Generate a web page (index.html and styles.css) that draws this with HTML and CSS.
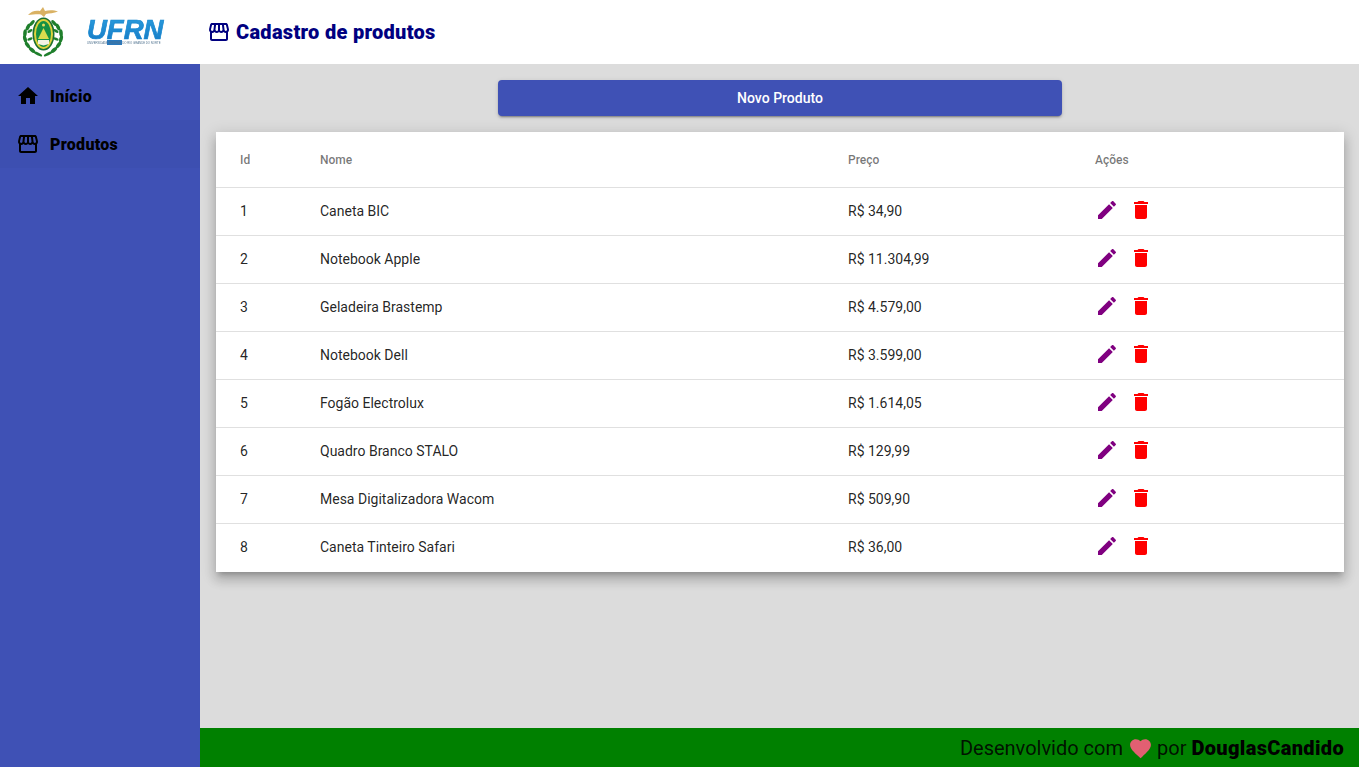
FILE: index.html
```html
<!DOCTYPE html>
<html lang="en">
<head>
  <meta charset="UTF-8" />
  <meta name="viewport" content="width=device-width, initial-scale=1.0"/>
  <title>Cadastro de produtos</title>
  <link rel="stylesheet" href="styles.css">
</head>
<body>
  <svg class="sprites" width="0" height="0">
    <symbol id="i-store" viewBox="0 0 24 24"><path d="M21.9 8.89l-1.05-4.37c-.22-.9-1-1.52-1.91-1.52H5.05c-.9 0-1.69.63-1.9 1.52L2.1 8.89c-.24 1.02-.02 2.06.62 2.88.08.11.19.19.28.29V19c0 1.1.9 2 2 2h14c1.1 0 2-.9 2-2v-6.94c.09-.09.2-.18.28-.28.64-.82.87-1.87.62-2.89zm-2.99-3.9l1.05 4.37c.1.42.01.84-.25 1.17-.14.18-.44.47-.94.47-.61 0-1.14-.49-1.21-1.14L16.98 5l1.93-.01zM13 5h1.96l.54 4.52c.05.39-.07.78-.33 1.07-.22.26-.54.41-.95.41-.67 0-1.22-.59-1.22-1.31V5zM8.49 9.52L9.04 5H11v4.69c0 .72-.55 1.31-1.29 1.31-.34 0-.65-.15-.89-.41-.25-.29-.37-.68-.33-1.07zm-4.45-.16L5.05 5h1.97l-.58 4.86c-.08.65-.6 1.14-1.21 1.14-.49 0-.8-.29-.93-.47-.27-.32-.36-.75-.26-1.17zM5 19v-6.03c.08.01.15.03.23.03.87 0 1.66-.36 2.24-.95.6.6 1.4.95 2.31.95.87 0 1.65-.36 2.23-.93.59.57 1.39.93 2.29.93.84 0 1.64-.35 2.24-.95.58.59 1.37.95 2.24.95.08 0 .15-.02.23-.03V19H5z"/></symbol>
    <symbol id="i-home" viewBox="0 0 24 24"><path d="M10 20v-6h4v6h5v-8h3L12 3 2 12h3v8z"/></symbol>
    <symbol id="i-edit" viewBox="0 0 24 24"><path d="M3 17.25V21h3.75L17.81 9.94l-3.75-3.75L3 17.25zM20.71 7.04c.39-.39.39-1.02 0-1.41l-2.34-2.34c-.39-.39-1.02-.39-1.41 0l-1.83 1.83 3.75 3.75 1.83-1.83z"/></symbol>
    <symbol id="i-delete" viewBox="0 0 24 24"><path d="M6 19c0 1.1.9 2 2 2h8c1.1 0 2-.9 2-2V7H6v12zM19 4h-3.5l-1-1h-5l-1 1H5v2h14V4z"/></symbol>
  </svg>

  <header class="topbar">
    <!-- viewBox uses page coordinates, easier to compare with the screenshot -->
    <svg class="crest" width="44" height="52" viewBox="20 6 44 52">
      <path d="M28 15 C31 11 36 10 40 11 L43 7 L45 11 C49 10 54 10 58 11.500 C54 13 49 13.500 46 14 L44 17 L41 14.500 C37 14 32 15 28 15z" fill="#d9b163"/>
      <g id="wreath" fill="#1f7f2c">
        <ellipse cx="32" cy="23" rx="3.600" ry="1.700" transform="rotate(-50 32 23)"/>
        <ellipse cx="28" cy="27" rx="3.800" ry="1.800" transform="rotate(-65 28 27)"/>
        <ellipse cx="25" cy="33" rx="3.800" ry="1.800" transform="rotate(-85 25 33)"/>
        <ellipse cx="25" cy="39" rx="3.800" ry="1.800" transform="rotate(75 25 39)"/>
        <ellipse cx="27.500" cy="45" rx="3.800" ry="1.800" transform="rotate(55 27.500 45)"/>
        <ellipse cx="32" cy="50" rx="3.800" ry="1.800" transform="rotate(40 32 50)"/>
        <ellipse cx="38" cy="54" rx="4.500" ry="1.500" transform="rotate(25 38 54)"/>
        <ellipse cx="30" cy="31" rx="2.800" ry="1.300" transform="rotate(-30 30 31)"/>
        <ellipse cx="30" cy="39" rx="2.800" ry="1.300" transform="rotate(-20 30 39)"/>
      </g>
      <use href="#wreath" transform="translate(86 0) scale(-1 1)"/>
      <ellipse cx="43.500" cy="34" rx="11" ry="16.500" fill="#1b6e30"/>
      <ellipse cx="43.500" cy="34" rx="9.500" ry="15" fill="#ddd23a"/>
      <ellipse cx="43.500" cy="34" rx="7.500" ry="13" fill="#159044"/>
      <circle cx="43.500" cy="25" r="1.500" fill="#e8e060"/>
      <path d="M43.500 28 L49 39 H38z" fill="#d9dd4e"/>
      <path d="M38 40 H49 V44 L43.500 45.500 L38 44z" fill="#f2f2e2"/>
    </svg>
    <svg class="ufrn" width="84" height="40" viewBox="0 0 84 40">
      <defs>
        <linearGradient id="ufrn-blue" x1="0" y1="0" x2="0" y2="1">
          <stop offset="0" stop-color="#2c9fdf"/>
          <stop offset="1" stop-color="#1478c4"/>
        </linearGradient>
      </defs>
      <text class="ufrn-name" x="1" y="27">UFRN</text>
      <rect x="21" y="28" width="15" height="5" fill="#2a79bd"/>
      <text class="ufrn-sub" x="1" y="32">UNIVERSIDADE FEDERAL DO RIO GRANDE DO NORTE</text>
    </svg>
    <h1 class="page-title">
      <svg class="icon"><use href="#i-store"/></svg>
      Cadastro de produtos
    </h1>
  </header>

  <div class="app">
    <nav class="sidebar">
      <a class="nav-item">
        <svg class="icon"><use href="#i-home"/></svg>
        Início
      </a>
      <a class="nav-item active">
        <svg class="icon"><use href="#i-store"/></svg>
        Produtos
      </a>
    </nav>

    <div class="main">
      <main class="content">
        <div class="actions">
          <button class="new-btn">Novo Produto</button>
        </div>
        <table class="products">
          <colgroup>
            <col class="col-id"><col class="col-name"><col class="col-price"><col>
          </colgroup>
          <thead>
            <tr><th>Id</th><th>Nome</th><th>Preço</th><th>Ações</th></tr>
          </thead>
          <tbody id="rows"></tbody>
        </table>
      </main>

      <footer class="footer">
        Desenvolvido com
        <svg class="heart" viewBox="0 0 24 24"><path d="M12 21.35l-1.45-1.32C5.4 15.36 2 12.28 2 8.5 2 5.42 4.42 3 7.5 3c1.74 0 3.41.81 4.5 2.09C13.09 3.81 14.76 3 16.5 3 19.58 3 22 5.42 22 8.5c0 3.78-3.4 6.86-8.55 11.54L12 21.35z"/></svg>
        por <strong>DouglasCandido</strong>
      </footer>
    </div>
  </div>

  <script>
    const products = [
      [1, 'Caneta BIC', 'R$ 34,90'],
      [2, 'Notebook Apple', 'R$ 11.304,99'],
      [3, 'Geladeira Brastemp', 'R$ 4.579,00'],
      [4, 'Notebook Dell', 'R$ 3.599,00'],
      [5, 'Fogão Electrolux', 'R$ 1.614,05'],
      [6, 'Quadro Branco STALO', 'R$ 129,99'],
      [7, 'Mesa Digitalizadora Wacom', 'R$ 509,90'],
      [8, 'Caneta Tinteiro Safari', 'R$ 36,00']
    ];

    document.getElementById('rows').innerHTML = products.map(p => `
      <tr>
        <td>${p[0]}</td>
        <td>${p[1]}</td>
        <td>${p[2]}</td>
        <td>
          <div class="row-actions">
            <svg class="icon edit"><use href="#i-edit"/></svg>
            <svg class="icon delete"><use href="#i-delete"/></svg>
          </div>
        </td>
      </tr>`).join('');
  </script>
</body>
</html>
```

FILE: styles.css
```css
* {
  box-sizing: border-box;
  margin: 0;
  padding: 0;
}

body {
  font-family: Roboto, sans-serif;
  height: 100vh;
  display: flex;
  flex-direction: column;
  overflow: hidden;
  background: #dcdcdc;
}

.sprites {
  position: absolute;
}

.icon {
  width: 24px;
  height: 24px;
  flex: none;
}

.topbar {
  height: 64px;
  flex: none;
  background: #fff;
  display: flex;
  align-items: center;
}

.crest {
  margin-left: 20px;
  margin-right: 22px;
  filter: blur(0.5px);
}

.ufrn {
  filter: blur(0.3px);
}

.ufrn-name {
  font-family: "Liberation Sans", sans-serif;
  font-size: 27.5px;
  font-weight: 700;
  font-style: italic;
  fill: url(#ufrn-blue);
  stroke: #1787cf;
  stroke-width: 0.7px;
}

.ufrn-sub {
  font-family: "Liberation Sans", sans-serif;
  font-size: 2.8px;
  fill: #4f718e;
}

.page-title {
  margin-left: 37px;
  display: flex;
  align-items: center;
  gap: 5px;
  font-size: 20px;
  font-weight: 900;
  letter-spacing: 0.3px;
  color: #000080;
}

.page-title .icon {
  fill: #000080;
}

.app {
  flex: 1;
  display: flex;
  min-height: 0;
}

.sidebar {
  width: 200px;
  flex: none;
  background: #3f51b5;
  padding-top: 8px;
}

.nav-item {
  height: 48px;
  padding-left: 16px;
  display: flex;
  align-items: center;
  gap: 10px;
  font-size: 16px;
  font-weight: 900;
  letter-spacing: 0.3px;
  color: #000;
}

.nav-item.active {
  background: #3d4fb1;
}

.main {
  flex: 1;
  min-width: 0;
  display: flex;
  flex-direction: column;
}

.content {
  flex: 1;
  padding: 16px 15px 0 16px;
}

.actions {
  display: flex;
  justify-content: center;
  margin-bottom: 16px;
}

.new-btn {
  width: 564px;
  height: 36px;
  border: none;
  border-radius: 4px;
  background: #3f51b5;
  color: #fff;
  font-family: Roboto, sans-serif;
  font-size: 14px;
  font-weight: 500;
  box-shadow: 0 3px 1px -2px rgba(0,0,0,0.2), 0 2px 2px 0 rgba(0,0,0,0.14), 0 1px 5px 0 rgba(0,0,0,0.12);
}

.products {
  width: 100%;
  table-layout: fixed;
  border-collapse: separate;
  border-spacing: 0;
  background: #fff;
  box-shadow: 0 5px 5px -3px rgba(0,0,0,0.2), 0 8px 10px 1px rgba(0,0,0,0.14), 0 3px 14px 2px rgba(0,0,0,0.12);
}

.col-id { width: 104px; }
.col-name { width: 528px; }
.col-price { width: 247px; }

.products th,
.products td {
  text-align: left;
  border-bottom: 1px solid #e0e0e0;
}

.products th:first-child,
.products td:first-child {
  padding-left: 24px;
}

.products th {
  height: 56px;
  font-size: 12px;
  font-weight: 500;
  color: rgba(0,0,0,0.54);
}

.products td {
  height: 48px;
  padding-bottom: 2px;
  font-size: 14px;
  color: rgba(0,0,0,0.87);
}

.products tbody tr:last-child td {
  border-bottom-color: transparent;
}

.row-actions {
  display: flex;
  gap: 10px;
  margin-bottom: 1px;
}

.edit {
  fill: #800080;
}

.delete {
  fill: #ff0000;
}

.footer {
  height: 39px;
  flex: none;
  background: #008000;
  padding-right: 15px;
  display: flex;
  align-items: center;
  justify-content: flex-end;
  gap: 5px;
  font-size: 20px;
  color: rgba(0,0,0,0.87);
}

.footer strong {
  font-weight: 900;
  letter-spacing: 0.35px;
  color: #000;
}

.heart {
  width: 25px;
  height: 25px;
  fill: #e25f72;
  margin-top: 2px;
  margin-right: -1px;
}
```
